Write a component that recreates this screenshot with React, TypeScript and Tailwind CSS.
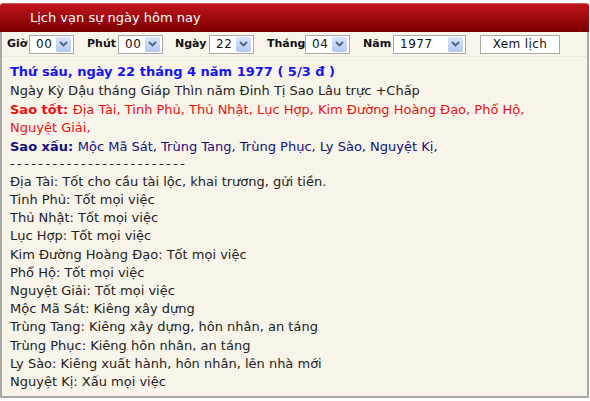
import React from 'react';

const FONT = { fontFamily: '"DejaVu Sans", Verdana, sans-serif' };

function Select({ value, width }: { value: string; width: string }) {
  return (
    <div
      className={`flex h-[19px] items-center justify-between border border-[#a9a9a9] bg-white pl-[6px] pr-[2px] text-[12px] font-normal tracking-[0.5px] text-[#111] ${width}`}
    >
      <span>{value}</span>
      <span className="flex h-[15px] w-[15px] items-center justify-center rounded-[2px] bg-gradient-to-b from-[#d8e4fb] to-[#b3c8f2]">
        <svg width="9" height="6" viewBox="0 0 9 6">
          <path d="M1 1 L4.5 4.5 L8 1" fill="none" stroke="#4d6185" strokeWidth="1.8" />
        </svg>
      </span>
    </div>
  );
}

const lines: string[] = [
  'Địa Tài: Tốt cho cầu tài lộc, khai trương, gửi tiền.',
  'Tinh Phủ: Tốt mọi việc',
  'Thủ Nhật: Tốt mọi việc',
  'Lục Hợp: Tốt mọi việc',
  'Kim Đường Hoàng Đạo: Tốt mọi việc',
  'Phổ Hộ: Tốt mọi việc',
  'Nguyệt Giải: Tốt mọi việc',
  'Mộc Mã Sát: Kiêng xây dựng',
  'Trùng Tang: Kiêng xây dựng, hôn nhân, an táng',
  'Trùng Phục: Kiêng hôn nhân, an táng',
  'Ly Sào: Kiêng xuất hành, hôn nhân, lên nhà mới',
  'Nguyệt Kị: Xấu mọi việc',
];

export default function App() {
  return (
    <div className="h-[401px] w-[590px] bg-white pt-[3px]" style={FONT}>
      <div className="w-[589px]">
        <div className="h-[29px] rounded-t-[3px] border-t border-[#d4585a] bg-gradient-to-b from-[#c0161b] to-[#7c0000] pl-[30px] pt-[5px] text-[13px] leading-[17px] text-white">
          Lịch vạn sự ngày hôm nay
        </div>
        <div className="h-[366px] border-x-2 border-b-2 border-[#a8a8a8] bg-[#f8f4ea]">
          <div className="flex h-[25px] items-center border-b border-[#ece7db] pl-[5px] text-[11px] font-bold text-[#111]">
            <span className="w-[22px]">Giờ</span>
            <Select value="00" width="w-[45px]" />
            <span className="ml-[13px] w-[31px]">Phút</span>
            <Select value="00" width="w-[45px]" />
            <span className="ml-[12px] w-[34px]">Ngày</span>
            <Select value="22" width="w-[45px]" />
            <span className="ml-[13px] w-[38px]">Tháng</span>
            <Select value="04" width="w-[45px]" />
            <span className="ml-[13px] w-[30px]">Năm</span>
            <Select value="1977" width="w-[73px]" />
            <button
              type="button"
              className="ml-[14px] h-[19px] w-[80px] border border-[#a9a9a9] bg-white text-[12px] font-normal leading-[17px] tracking-[0.4px] text-[#111]"
              style={FONT}
            >
              Xem lịch
            </button>
          </div>
          <div className="pl-[8px] pt-[6px] text-[13px] text-[#222]">
            <div className="leading-[18.75px]">
              <div className="font-bold text-[#1414f0]">
                Thứ sáu, ngày 22 tháng 4 năm 1977 ( 5/3 đ )
              </div>
              <div>Ngày Kỳ Dậu tháng Giáp Thìn năm Đinh Tị Sao Lâu trực +Chấp</div>
              <div className="whitespace-nowrap text-[#f01010]">
                <span className="font-bold">Sao tốt: </span>
                Địa Tài, Tinh Phủ, Thủ Nhật, Lục Hợp, Kim Đường Hoàng Đạo, Phổ Hộ,
                <br />
                Nguyệt Giải,
              </div>
              <div className="text-[#10107e]">
                <span className="font-bold">Sao xấu: </span>
                Mộc Mã Sát, Trùng Tang, Trùng Phục, Ly Sào, Nguyệt Kị,
              </div>
            </div>
            <div className="h-[16px] leading-[13px] tracking-[2.4px]">-------------------------</div>
            <div className="leading-[18.2px]">
              {lines.map((line) => (
                <div key={line}>{line}</div>
              ))}
            </div>
          </div>
        </div>
      </div>
    </div>
  );
}
